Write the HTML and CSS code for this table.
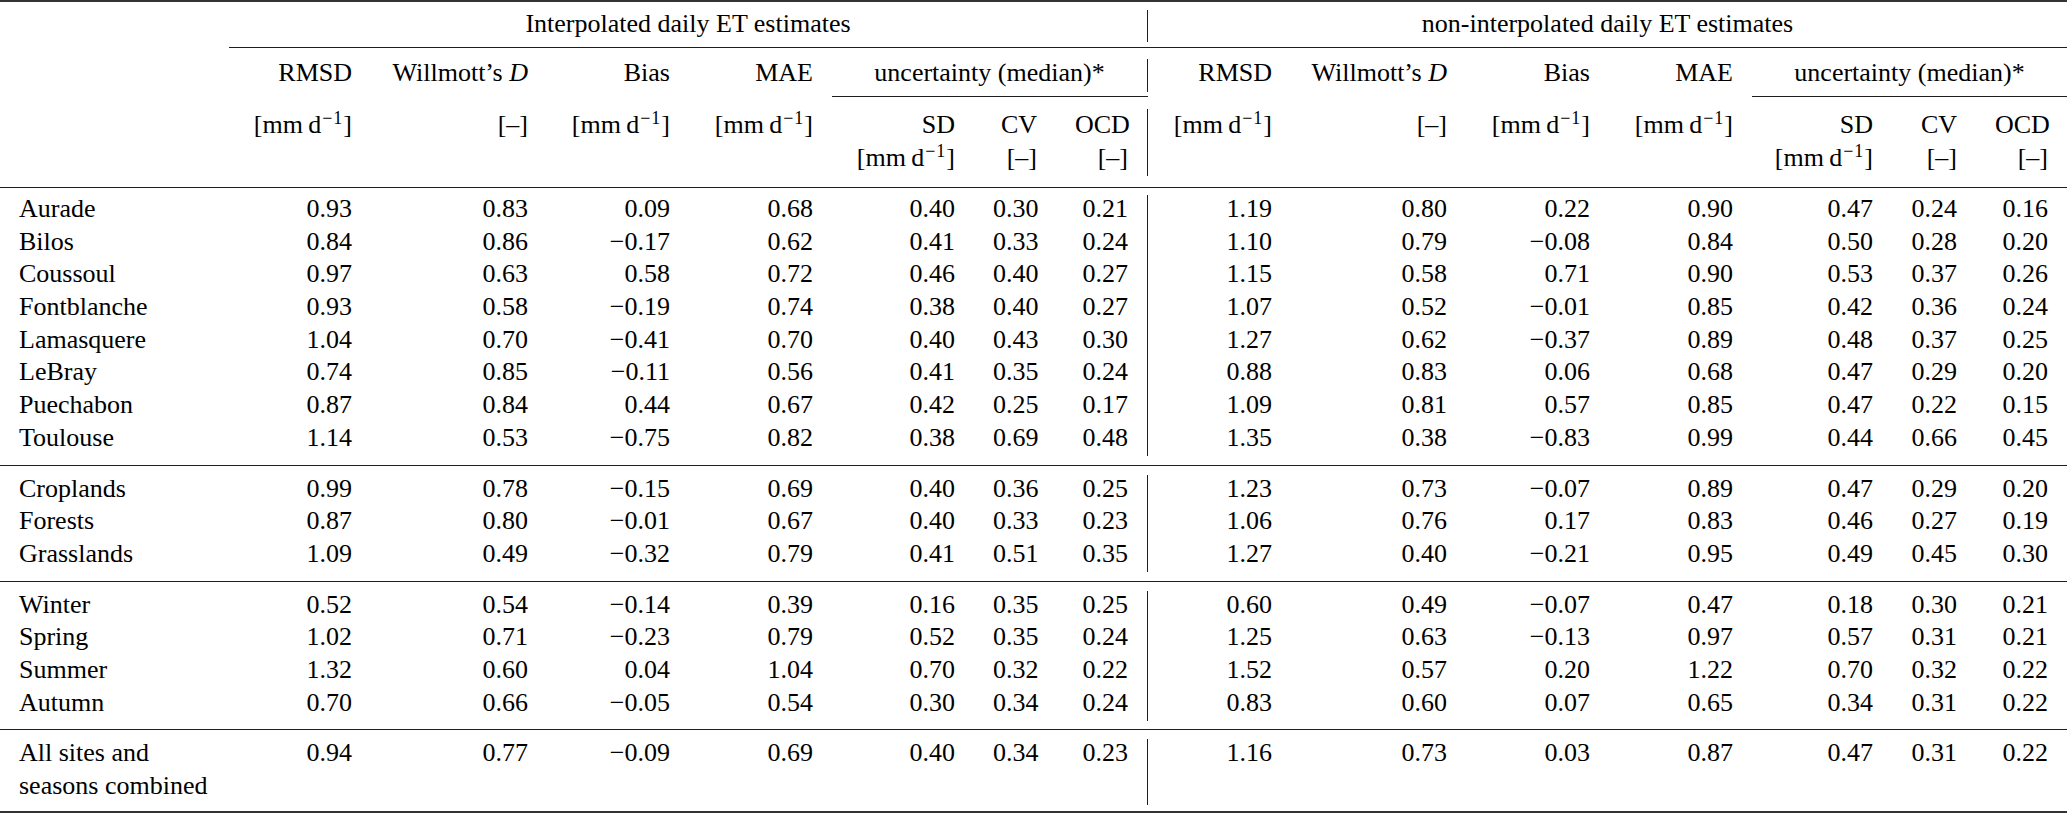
FILE: index.html
```html
<!DOCTYPE html>
<html lang="en">
<head>
<meta charset="utf-8">
<title>Daily ET estimates</title>
<link rel="stylesheet" href="styles.css">
</head>
<body>
<div class="tbl">
  <div class="sp sp-top"><i class="ln heavy all"></i></div>

  <div class="r">
    <div class="lab"></div>
    <div class="grp g1 vr">Interpolated daily ET estimates</div>
    <div class="grp g2">non-interpolated daily ET estimates</div>
  </div>

  <div class="sp sp-cm1"><i class="ln thin from2"></i></div>

  <div class="r">
    <div class="lab"></div>
    <div>RMSD</div><div>Willmott’s <em>D</em></div><div>Bias</div><div>MAE</div>
    <div class="grp u1 vr">uncertainty (median)*</div>
    <div>RMSD</div><div>Willmott’s <em>D</em></div><div>Bias</div><div>MAE</div>
    <div class="grp u2">uncertainty (median)*</div>
  </div>

  <div class="sp sp-cm2"><i class="ln thin c-u1"></i><i class="ln thin c-u2"></i></div>

  <div class="r r3a">
    <div class="lab"></div>
    <div>[mm&#8201;d<sup>−1</sup>]</div><div>[–]</div><div>[mm&#8201;d<sup>−1</sup>]</div><div>[mm&#8201;d<sup>−1</sup>]</div>
    <div>SD</div><div>CV</div><div class="vr">OCD</div>
    <div>[mm&#8201;d<sup>−1</sup>]</div><div>[–]</div><div>[mm&#8201;d<sup>−1</sup>]</div><div>[mm&#8201;d<sup>−1</sup>]</div>
    <div>SD</div><div>CV</div><div>OCD</div>
  </div>
  <div class="r">
    <div class="lab"></div>
    <div></div><div></div><div></div><div></div>
    <div>[mm&#8201;d<sup>−1</sup>]</div><div>[–]</div><div class="vr">[–]</div>
    <div></div><div></div><div></div><div></div>
    <div>[mm&#8201;d<sup>−1</sup>]</div><div>[–]</div><div>[–]</div>
  </div>

  <div class="sp sp-mid"><i class="ln mid all"></i></div>

  <div class="r"><div class="lab">Aurade</div><div>0.93</div><div>0.83</div><div>0.09</div><div>0.68</div><div>0.40</div><div>0.30</div><div class="vr">0.21</div><div>1.19</div><div>0.80</div><div>0.22</div><div>0.90</div><div>0.47</div><div>0.24</div><div>0.16</div></div>
  <div class="r"><div class="lab">Bilos</div><div>0.84</div><div>0.86</div><div>−0.17</div><div>0.62</div><div>0.41</div><div>0.33</div><div class="vr">0.24</div><div>1.10</div><div>0.79</div><div>−0.08</div><div>0.84</div><div>0.50</div><div>0.28</div><div>0.20</div></div>
  <div class="r"><div class="lab">Coussoul</div><div>0.97</div><div>0.63</div><div>0.58</div><div>0.72</div><div>0.46</div><div>0.40</div><div class="vr">0.27</div><div>1.15</div><div>0.58</div><div>0.71</div><div>0.90</div><div>0.53</div><div>0.37</div><div>0.26</div></div>
  <div class="r"><div class="lab">Fontblanche</div><div>0.93</div><div>0.58</div><div>−0.19</div><div>0.74</div><div>0.38</div><div>0.40</div><div class="vr">0.27</div><div>1.07</div><div>0.52</div><div>−0.01</div><div>0.85</div><div>0.42</div><div>0.36</div><div>0.24</div></div>
  <div class="r"><div class="lab">Lamasquere</div><div>1.04</div><div>0.70</div><div>−0.41</div><div>0.70</div><div>0.40</div><div>0.43</div><div class="vr">0.30</div><div>1.27</div><div>0.62</div><div>−0.37</div><div>0.89</div><div>0.48</div><div>0.37</div><div>0.25</div></div>
  <div class="r"><div class="lab">LeBray</div><div>0.74</div><div>0.85</div><div>−0.11</div><div>0.56</div><div>0.41</div><div>0.35</div><div class="vr">0.24</div><div>0.88</div><div>0.83</div><div>0.06</div><div>0.68</div><div>0.47</div><div>0.29</div><div>0.20</div></div>
  <div class="r"><div class="lab">Puechabon</div><div>0.87</div><div>0.84</div><div>0.44</div><div>0.67</div><div>0.42</div><div>0.25</div><div class="vr">0.17</div><div>1.09</div><div>0.81</div><div>0.57</div><div>0.85</div><div>0.47</div><div>0.22</div><div>0.15</div></div>
  <div class="r"><div class="lab">Toulouse</div><div>1.14</div><div>0.53</div><div>−0.75</div><div>0.82</div><div>0.38</div><div>0.69</div><div class="vr">0.48</div><div>1.35</div><div>0.38</div><div>−0.83</div><div>0.99</div><div>0.44</div><div>0.66</div><div>0.45</div></div>

  <div class="sp sp-grp"><i class="ln mid all"></i></div>

  <div class="r"><div class="lab">Croplands</div><div>0.99</div><div>0.78</div><div>−0.15</div><div>0.69</div><div>0.40</div><div>0.36</div><div class="vr">0.25</div><div>1.23</div><div>0.73</div><div>−0.07</div><div>0.89</div><div>0.47</div><div>0.29</div><div>0.20</div></div>
  <div class="r"><div class="lab">Forests</div><div>0.87</div><div>0.80</div><div>−0.01</div><div>0.67</div><div>0.40</div><div>0.33</div><div class="vr">0.23</div><div>1.06</div><div>0.76</div><div>0.17</div><div>0.83</div><div>0.46</div><div>0.27</div><div>0.19</div></div>
  <div class="r"><div class="lab">Grasslands</div><div>1.09</div><div>0.49</div><div>−0.32</div><div>0.79</div><div>0.41</div><div>0.51</div><div class="vr">0.35</div><div>1.27</div><div>0.40</div><div>−0.21</div><div>0.95</div><div>0.49</div><div>0.45</div><div>0.30</div></div>

  <div class="sp sp-grp"><i class="ln mid all"></i></div>

  <div class="r"><div class="lab">Winter</div><div>0.52</div><div>0.54</div><div>−0.14</div><div>0.39</div><div>0.16</div><div>0.35</div><div class="vr">0.25</div><div>0.60</div><div>0.49</div><div>−0.07</div><div>0.47</div><div>0.18</div><div>0.30</div><div>0.21</div></div>
  <div class="r"><div class="lab">Spring</div><div>1.02</div><div>0.71</div><div>−0.23</div><div>0.79</div><div>0.52</div><div>0.35</div><div class="vr">0.24</div><div>1.25</div><div>0.63</div><div>−0.13</div><div>0.97</div><div>0.57</div><div>0.31</div><div>0.21</div></div>
  <div class="r"><div class="lab">Summer</div><div>1.32</div><div>0.60</div><div>0.04</div><div>1.04</div><div>0.70</div><div>0.32</div><div class="vr">0.22</div><div>1.52</div><div>0.57</div><div>0.20</div><div>1.22</div><div>0.70</div><div>0.32</div><div>0.22</div></div>
  <div class="r"><div class="lab">Autumn</div><div>0.70</div><div>0.66</div><div>−0.05</div><div>0.54</div><div>0.30</div><div>0.34</div><div class="vr">0.24</div><div>0.83</div><div>0.60</div><div>0.07</div><div>0.65</div><div>0.34</div><div>0.31</div><div>0.22</div></div>

  <div class="sp sp-grp"><i class="ln mid all"></i></div>

  <div class="r"><div class="lab">All sites and</div><div>0.94</div><div>0.77</div><div>−0.09</div><div>0.69</div><div>0.40</div><div>0.34</div><div class="vr">0.23</div><div>1.16</div><div>0.73</div><div>0.03</div><div>0.87</div><div>0.47</div><div>0.31</div><div>0.22</div></div>
  <div class="r"><div class="lab">seasons combined</div><div></div><div></div><div></div><div></div><div></div><div></div><div class="vr"></div><div></div><div></div><div></div><div></div><div></div><div></div><div></div></div>

  <div class="sp sp-bot"><i class="ln heavy all"></i></div>
</div>
</body>
</html>
```

FILE: styles.css
```css
html, body {
  margin: 0;
  padding: 0;
  background: #ffffff;
}

body {
  font-family: "Liberation Serif", "Times New Roman", serif;
  font-size: 26px;
  color: #000000;
}

.tbl {
  width: 2067px;
  --cols: 229px 142px 176px 142px 143px 142px 82px 92px 143px 175px 143px 143px 140px 84px 91px;
}

.r,
.sp {
  display: grid;
  grid-template-columns: var(--cols);
}

.r > div {
  box-sizing: border-box;
  line-height: 28px;
  padding: 0 19px 4.65px 19px;
  text-align: right;
  white-space: nowrap;
}

.r > .lab {
  text-align: left;
}

.r > .vr {
  border-right: 1px solid #1e1e1e;
}

.r > .grp {
  text-align: center;
  padding-left: 0;
  padding-right: 0;
}

.g1 { grid-column: 2 / 9; }
.g2 { grid-column: 9 / 16; }
.u1 { grid-column: 6 / 9; }
.u2 { grid-column: 13 / 16; }

.r3a > div {
  padding-top: 1.5px;
}

em {
  font-style: italic;
}

sup {
  font-size: 18px;
  line-height: 0;
  vertical-align: 9px;
  margin-left: 1px;
  letter-spacing: 1px;
}

/* spacer rows holding the booktabs-style rules */
.sp {
  box-sizing: border-box;
}

.ln {
  display: block;
  background: #1e1e1e;
}

.ln.heavy { height: 2px; background: #333333; }
.ln.mid { height: 1px; }
.ln.thin { height: 1px; }

.ln.all { grid-column: 1 / -1; }
.ln.from2 { grid-column: 2 / -1; }
.ln.c-u1 { grid-column: 6 / 9; }
.ln.c-u2 { grid-column: 13 / 16; }

.sp-top { height: 9.5px; }
.sp-top .ln { margin-top: 0; }

.sp-cm1 { height: 17.1px; }
.sp-cm1 .ln { margin-top: 4.85px; }

.sp-cm2 { height: 17.6px; }
.sp-cm2 .ln { margin-top: 4.6px; }

.sp-mid { height: 18.95px; }
.sp-mid .ln { margin-top: 10.7px; }

.sp-grp { height: 18.2px; }
.sp-grp .ln { margin-top: 8.2px; }

.sp-bot { height: 8px; }
.sp-bot .ln { margin-top: 6px; }
```
